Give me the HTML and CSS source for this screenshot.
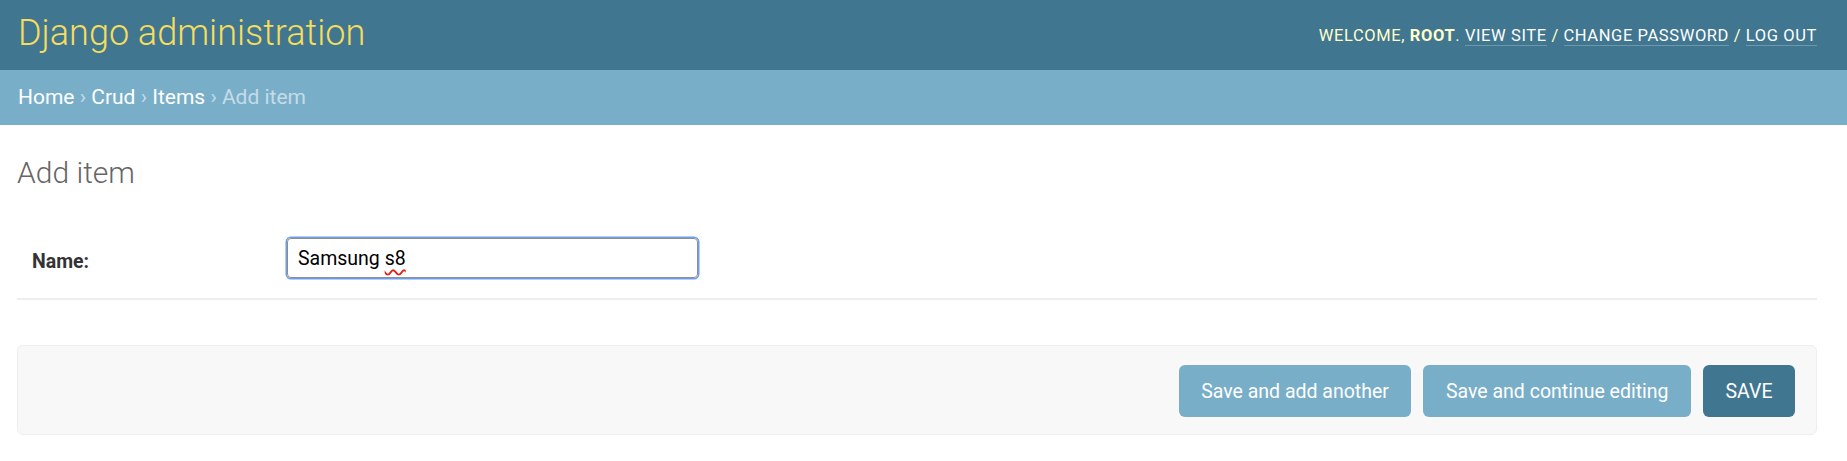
FILE: index.html
```html
<!DOCTYPE html>
<html lang="en">
<head>
<meta charset="utf-8">
<title>Add item | Django site admin</title>
<link rel="stylesheet" href="styles.css">
</head>
<body>
<header class="header">
  <div class="branding">Django administration</div>
  <div class="user-tools">
    Welcome, <strong>root</strong>. <a href="#">View site</a> / <a href="#">Change password</a> / <a href="#">Log out</a>
  </div>
</header>
<nav class="breadcrumbs">
  <a href="#">Home</a> › <a href="#">Crud</a> › <a href="#">Items</a> › Add item
</nav>
<main class="content">
  <h1 class="title">Add item</h1>
  <form class="form">
    <div class="form-row">
      <label class="label">Name:</label>
      <div class="field"><span class="text">Samsung <span class="misspelled">s8</span></span></div>
    </div>
    <div class="submit-row">
      <button type="button" class="btn">Save and add another</button>
      <button type="button" class="btn">Save and continue editing</button>
      <button type="button" class="btn btn-default">Save</button>
    </div>
  </form>
</main>
</body>
</html>
```
FILE: styles.css
```css
* { box-sizing: border-box; }
html, body { margin: 0; padding: 0; background: #fff; }
body {
  font-family: Roboto, "Liberation Sans", Arial, sans-serif;
  color: #333;
}
.header {
  height: 70px;
  background: #417690;
  padding: 0 30px 0 18px;
  display: flex;
  align-items: center;
  justify-content: space-between;
}
.branding {
  font-size: 36px;
  font-weight: 300;
  color: #f5dd5d;
  margin-top: -4px;
}
.user-tools {
  font-size: 16.5px;
  letter-spacing: 0.6px;
  text-transform: uppercase;
  color: #ffc;
  font-weight: 400;
}
.user-tools strong { font-weight: 700; }
.user-tools a {
  color: #fff;
  text-decoration: none;
  border-bottom: 1.5px solid rgba(255,255,255,0.25);
}
.breadcrumbs {
  display: block;
  height: 55px;
  line-height: 55px;
  background: #79aec8;
  padding: 0 30px 0 18px;
  font-size: 21px;
  color: #c4dce8;
}
.breadcrumbs a { color: #fff; text-decoration: none; }
.content { padding: 0 30px 0 17px; }
.title {
  margin: 30px 0 33px;
  font-size: 30px;
  font-weight: 300;
  color: #666;
  line-height: normal;
}
.form-row {
  display: flex;
  align-items: flex-start;
  padding: 15px 15px 20px;
  border-bottom: 2px solid #eeeeee;
}
.label {
  width: 255px;
  flex: none;
  padding-top: 12px;
  font-size: 19.5px;
  font-weight: 700;
  color: #333;
}
.field {
  width: 411px;
  height: 40px;
  border: 1px solid #8f8f8f;
  border-radius: 4px;
  box-shadow: 0 0 0 1.5px #6d9eeb;
  padding: 0 10px;
  display: flex;
  align-items: center;
  font-size: 19.5px;
  color: #000;
}
.misspelled {
  text-decoration: underline wavy #e0201b;
  text-decoration-thickness: 1.5px;
  text-underline-offset: 4px;
}
.submit-row {
  margin-top: 45px;
  height: 90px;
  background: #f8f8f8;
  border: 1.5px solid #eeeeee;
  border-radius: 6px;
  padding: 0 21px 0 0;
  display: flex;
  align-items: center;
  justify-content: flex-end;
  gap: 12px;
}
.btn {
  height: 52px;
  padding: 0 22.5px;
  border: none;
  border-radius: 6px;
  background: #79aec8;
  color: #fff;
  font-family: Roboto, "Liberation Sans", Arial, sans-serif;
  font-size: 19.5px;
  font-weight: 400;
  margin-top: 2px;
}
.btn-default {
  background: #417690;
  text-transform: uppercase;
}
```
